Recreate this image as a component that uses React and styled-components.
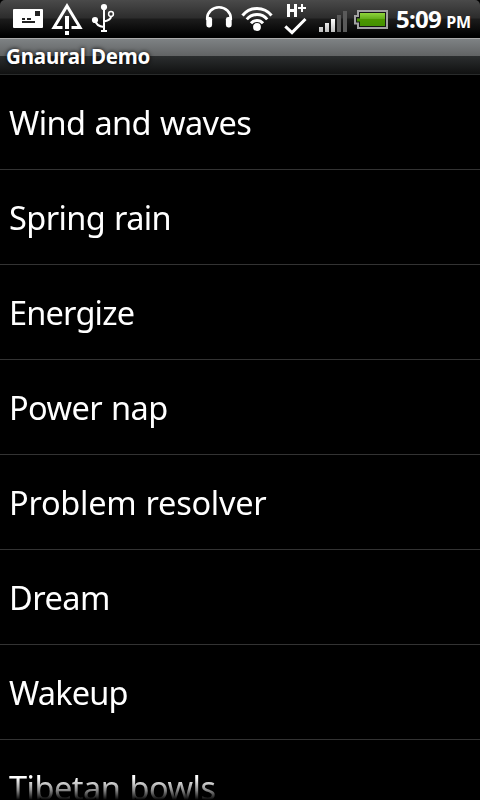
import styled, { createGlobalStyle } from "styled-components"

const tracks = [
    { name: "Wind and waves", spacing: -.55 },
    { name: "Spring rain", spacing: -.6 },
    { name: "Energize", spacing: -.8 },
    { name: "Power nap", spacing: -.56 },
    { name: "Problem resolver", spacing: -.26 },
    { name: "Dream", spacing: -.5 },
    { name: "Wakeup", spacing: -.8 },
    { name: "Tibetan bowls", spacing: -.48 },
]

const MessageIcon = () => (
    <Icon width="32" viewBox="12 0 32 38">
        <rect x="13" y="9" width="30" height="19" rx="1" fill="#fff" />
        <path d="M35 11h5v5h-5z M22 18h3v2h-3z M27 18h4v2h-4z M22 21h13v2h-13z" fill="#222" />
    </Icon>
)

const WarningIcon = () => (
    <Icon width="33" viewBox="51 0 33 38">
        <path d="M62.5 27.5H54L67 6L80 27.5H71.5" fill="none" stroke="#fff" strokeWidth="3" />
        <path d="M65 16h4v13h-4z M65 31h4v4h-4z" fill="#fff" />
    </Icon>
)

const UsbIcon = () => (
    <Icon width="25" viewBox="91 0 25 38">
        <circle cx="104" cy="7" r="3.1" fill="#fff" />
        <circle cx="95" cy="20" r="3.1" fill="#fff" />
        <circle cx="111" cy="14" r="2.4" fill="none" stroke="#fff" strokeWidth="1.5" />
        <path d="M104 7V31 M95 20Q96 26 104 27 M111 16.5Q111 20 104 21.5" fill="none" stroke="#fff" strokeWidth="2" />
        <path d="M101 30h6v2h-6z" fill="#fff" />
    </Icon>
)

const HeadphonesIcon = () => (
    <Icon width="30" viewBox="204 0 30 38">
        <path d="M207.2 20V18.5A11.8 11.3 0 0 1 230.8 18.5V20" fill="none" stroke="#fff" strokeWidth="2.6" />
        <rect x="206.3" y="17" width="5.8" height="10.4" rx="2.3" fill="#fff" />
        <rect x="225.9" y="17" width="5.8" height="10.4" rx="2.3" fill="#fff" />
    </Icon>
)

const WifiIcon = () => (
    <Icon width="32" viewBox="241 0 32 38">
        <circle cx="257" cy="27" r="3.9" fill="#fff" />
        <path
            d="M242.5 15.5A18.5 18.5 0 0 1 271.5 15.5 M246.8 19.4A13.2 13.2 0 0 1 267.2 19.4 M251 23.3A7.8 7.8 0 0 1 263 23.3"
            fill="none"
            stroke="#fff"
            strokeWidth="3"
        />
    </Icon>
)

const DataIcon = () => (
    <Icon width="25" viewBox="283 0 25 38">
        <path d="M287 4h3v5h4v-5h3v13h-3v-5h-4v5h-3z" fill="#fff" />
        <path d="M301 4h2v3h3v2h-3v3h-2v-3h-3v-2h3z" fill="#fff" />
        <path d="M285.3 26.3L292 32.6L305.5 19" fill="none" stroke="#fff" strokeWidth="3" />
    </Icon>
)

const SignalIcon = () => (
    <Icon width="30" viewBox="318 0 30 38">
        <defs>
            <linearGradient id="bar" x1="0" y1="0" x2="0" y2="1">
                <stop offset="0" stopColor="#fff" />
                <stop offset="1" stopColor="#bdbdbd" />
            </linearGradient>
        </defs>
        <path d="M319 27h4v5h-4z M325 23h4v9h-4z M331 19h4v13h-4z" fill="url(#bar)" />
        <path d="M337 15h4v17h-4z M343 11h4v21h-4z" fill="#5a5a5a" />
    </Icon>
)

const BatteryIcon = () => (
    <Icon width="36" viewBox="353 0 36 38">
        <defs>
            <linearGradient id="charge" x1="0" y1="0" x2="0" y2="1">
                <stop offset="0" stopColor="#8fd53c" />
                <stop offset=".45" stopColor="#64ad1c" />
                <stop offset=".5" stopColor="#4c9700" />
                <stop offset="1" stopColor="#439000" />
            </linearGradient>
        </defs>
        <path d="M358 11H387V28H358V23.5H355V16H358Z" fill="#151515" stroke="#a2a2a2" strokeWidth="2" />
        <path d="M360 13H385V26H360V21.5H357V18.5H360Z" fill="url(#charge)" />
    </Icon>
)

export default function App() {
    return (
        <Screen>
            <GlobalStyle />
            <StatusBar>
                <Notifications>
                    <MessageIcon />
                    <WarningIcon />
                    <UsbIcon />
                </Notifications>
                <SystemIcons>
                    <HeadphonesIcon />
                    <WifiIcon />
                    <DataIcon />
                    <SignalIcon />
                    <BatteryIcon />
                    <Clock>5:09<Period>PM</Period></Clock>
                </SystemIcons>
            </StatusBar>

            <TitleBar>
                <Title>Gnaural Demo</Title>
            </TitleBar>

            <List>
                {tracks.map(({ name, spacing }) => (
                    <Row key={name}>
                        <Label $spacing={spacing}>{name}</Label>
                    </Row>
                ))}
            </List>
        </Screen>
    )
}

const GlobalStyle = createGlobalStyle`
    * {
        box-sizing: border-box;
    }

    body {
        margin: 0;
        background: #000;
        overflow: hidden;
    }
`

const Screen = styled.div`
    display: flex;
    flex-direction: column;
    width: 480px;
    height: 800px;
    overflow: hidden;
    background: #000;
    color: #fff;
    font-family: "Noto Sans", "Open Sans", sans-serif;
`

const StatusBar = styled.header`
    display: flex;
    justify-content: space-between;
    flex: none;
    height: 38px;
    padding: 0 9px 0 12px;
    border-radius: 5px 5px 0 0;
    background: linear-gradient(#4a4a4a 0, #2c2c2c 18px, #1c1c1c 19px, #000 36px);
`

const Notifications = styled.div`
    display: flex;
    gap: 7px;
`

const SystemIcons = styled.div`
    display: flex;

    svg + svg {
        margin-left: 7px;
    }

    svg:nth-child(3),
    svg:nth-child(4) {
        margin-left: 10px;
    }

    svg:nth-child(5) {
        margin-left: 5px;
    }
`

const Icon = styled.svg`
    display: block;
    flex: none;
    height: 38px;
`

const Clock = styled.time`
    display: flex;
    align-items: baseline;
    justify-content: space-between;
    width: 75px;
    margin-left: 7px;
    font-size: 24px;
    font-weight: 700;
    line-height: 38px;
    letter-spacing: -.7px;
`

const Period = styled.span`
    font-size: 16px;
    line-height: 1;
    letter-spacing: -.1px;
`

const TitleBar = styled.div`
    flex: 0 0 37px;
    padding-left: 6px;
    border-top: 1px solid #aaa;
    border-bottom: 1px solid #292b2b;
    background: linear-gradient(#7e8284 0, #616364 17px, #2b2e2f 17px, #101111 35px);
`

const Title = styled.h1`
    margin: 0;
    font-size: 20.5px;
    font-weight: 700;
    line-height: 35px;
    letter-spacing: -.17px;
    text-shadow: 0 0 4px #000;
`

const List = styled.ul`
    flex: 1;
    min-height: 0;
    margin: 0;
    padding: 0;
    overflow: hidden;
    list-style: none;
    mask-image: linear-gradient(#000 calc(100% - 22px), rgba(0, 0, 0, .55) calc(100% - 10px), transparent);
`

const Row = styled.li`
    display: flex;
    align-items: center;
    height: 95px;
    padding: 2px 0 0 9px;
    border-bottom: 1px solid #333;
`

const Label = styled.span`
    font-size: 32.5px;
    line-height: 48px;
    letter-spacing: ${props => props.$spacing}px;
    word-spacing: 1px;
    white-space: nowrap;
`
